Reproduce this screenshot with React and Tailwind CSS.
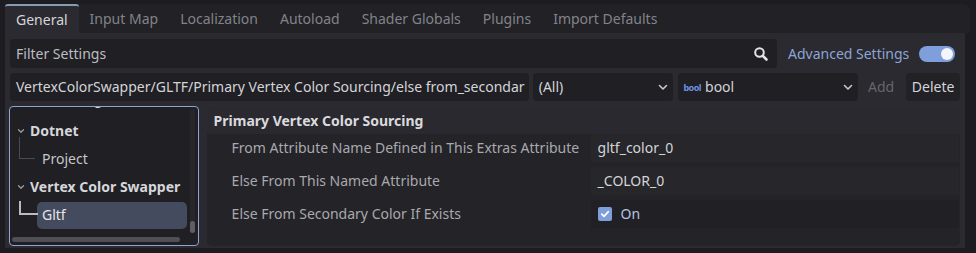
import React from "react";

const Chevron = ({ className = "" }) => (
  <svg width="12" height="12" viewBox="0 0 12 12" className={className}>
    <path d="M2.5 4.5 L6 8 L9.5 4.5" fill="none" stroke="#c8c8cc" strokeWidth="1.6" strokeLinecap="round" strokeLinejoin="round" />
  </svg>
);

const SmallChevron = () => (
  <svg width="8" height="8" viewBox="0 0 8 8">
    <path d="M1.5 2.8 L4 5.3 L6.5 2.8" fill="none" stroke="#9a9aa0" strokeWidth="1.3" strokeLinecap="round" strokeLinejoin="round" />
  </svg>
);

export default function App() {
  const tabs = ["General", "Input Map", "Localization", "Autoload", "Shader Globals", "Plugins", "Import Defaults"];
  return (
    <div
      className="w-[976px] h-[253px] bg-[#1c1c21] overflow-hidden text-[14px] leading-none"
      style={{ fontFamily: '"Noto Sans", "Open Sans", sans-serif' }}
    >
      <div className="pl-[5px] pt-[4px] w-[970px]">
        {/* Tab bar */}
        <div className="flex h-[29px] bg-[#212126] rounded-tr-[6px]">
          {tabs.map((t, i) =>
            i === 0 ? (
              <div key={t} className="flex items-center h-full px-[11px] bg-[#2a2a30] border-t-2 border-[#8b9ab3] rounded-t-[3px] text-[#d6d6da]">
                {t}
              </div>
            ) : (
              <div key={t} className="flex items-center h-full px-[11px] text-[#838389]">
                {t}
              </div>
            )
          )}
        </div>
        {/* Main panel */}
        <div className="w-[960px] h-[215px] bg-[#2a2a30] pt-[6px] px-[5px]">
          {/* Filter row */}
          <div className="flex items-center h-[29px]">
            <div className="flex items-center w-[767px] h-full bg-[#1f1f24] rounded-[4px] pl-[6px] pr-[8px] text-[#bdbdc1]">
              <span className="flex-1">Filter Settings</span>
              <svg width="16" height="16" viewBox="0 0 16 16">
                <circle cx="6.5" cy="6.5" r="4.3" fill="none" stroke="#e4e4e8" strokeWidth="2" />
                <path d="M9.8 9.8 L13.5 13.5" stroke="#e4e4e8" strokeWidth="2.6" strokeLinecap="round" />
              </svg>
            </div>
            <span className="ml-[11px] text-[#8da5d5]">Advanced Settings</span>
            <div className="ml-[10px] w-[36px] h-[16px] rounded-full bg-[#7e9fdc] flex items-center justify-end pr-[2px]">
              <div className="w-[12px] h-[12px] rounded-full bg-[#f4f6fb]" />
            </div>
          </div>
          {/* Path row */}
          <div className="flex items-center h-[28px] mt-[5px]">
            <div className="flex items-center w-[520px] h-full bg-[#1f1f24] rounded-[4px] pl-[6px] text-[#d4d4d8] overflow-hidden whitespace-nowrap">
              VertexColorSwapper/GLTF/Primary Vertex Color Sourcing/else from_secondar
            </div>
            <div className="flex items-center w-[141px] ml-[4px] h-full bg-[#1f1f24] rounded-[4px] pl-[6px] pr-[4px] text-[#d4d4d8]">
              <span className="flex-1">(All)</span>
              <Chevron />
            </div>
            <div className="flex items-center w-[180px] ml-[5px] h-full bg-[#1f1f24] rounded-[4px] pl-[5px] pr-[4px] text-[#d4d4d8]">
              <span className="text-[9px] font-bold text-[#6f92e0] tracking-[-0.5px] mr-[4px] leading-none">bool</span>
              <span className="flex-1">bool</span>
              <Chevron />
            </div>
            <span className="ml-[10px] text-[#66666c]">Add</span>
            <div className="ml-[12px] flex items-center justify-center w-[54px] h-full bg-[#212126] rounded-[4px] text-[#d4d4d8]">
              Delete
            </div>
          </div>
          {/* Bottom area */}
          <div className="flex mt-[5px] h-[140px]">
            {/* Tree */}
            <div className="relative -ml-[1px] w-[190px] h-[140px] bg-[#1f1f24] border border-[#8ea4d2] rounded-[4px] overflow-hidden">
              <div className="absolute left-[46px] -top-[15px] text-[#d4d4d8]">Settings</div>
              <div className="flex flex-col pl-[7px] pt-[10px]">
                <div className="flex items-center h-[28px] font-bold text-[#d6d6da]">
                  <span className="w-[13px] flex justify-start"><SmallChevron /></span>
                  <span>Dotnet</span>
                </div>
                <div className="relative flex items-center h-[28px] text-[#c6c6ca]">
                  <div className="absolute left-[2px] top-[-8px] w-[16px] h-[22px] border-l border-b border-[#4a4a50]" />
                  <span className="ml-[25px]">Project</span>
                </div>
                <div className="flex items-center h-[28px] font-bold text-[#d6d6da]">
                  <span className="w-[13px] flex justify-start"><SmallChevron /></span>
                  <span>Vertex Color Swapper</span>
                </div>
                <div className="relative flex items-center h-[28px] text-[#e4e4e8]">
                  <div className="absolute left-[2px] top-[0px] w-[19px] h-[14px] border-l-2 border-b-2 border-[#bcbcc0]" />
                  <div className="ml-[20px] w-[150px] h-[27px] rounded-[5px] bg-[#444b5e] flex items-center pl-[5px]">Gltf</div>
                </div>
              </div>
              {/* vertical scrollbar */}
              <div className="absolute right-[3px] top-[2px] w-[5px] h-[124px] rounded-full bg-[#26262b]">
                <div className="absolute bottom-0 left-0 w-[5px] h-[12px] rounded-full bg-[#5e5e64]" />
              </div>
              {/* horizontal scrollbar */}
              <div className="absolute left-[2px] bottom-[3px] w-[168px] h-[5px] rounded-full bg-[#4f4f55]" />
            </div>
            {/* Inspector */}
            <div className="ml-[8px] w-[755px] h-[139px] mt-[1px] bg-[#232328] rounded-[5px] overflow-hidden">
              <div className="flex items-center h-[27px] bg-[#29292f] pl-[7px] font-bold text-[#dadade]">
                Primary Vertex Color Sourcing
              </div>
              <div className="flex flex-col gap-[5px]">
                {[
                  ["From Attribute Name Defined in This Extras Attribute", "gltf_color_0"],
                  ["Else From This Named Attribute", "_COLOR_0"],
                  ["Else From Secondary Color If Exists", null],
                ].map(([label, val], i) => (
                  <div key={label} className="flex items-center h-[28px]">
                    <div className="w-[384px] pl-[25px] text-[#a9a9ae] whitespace-nowrap">{label}</div>
                    <div className={`flex items-center h-[28px] w-[368px] pl-[7px] text-[#d4d4d8] ${i === 2 ? "bg-[#202025]" : "bg-[#26262b]"}`}>
                      {val !== null ? (
                        val
                      ) : (
                        <>
                          <div className="w-[14px] h-[14px] rounded-[2px] bg-[#7e9fdc] flex items-center justify-center">
                            <svg width="10" height="10" viewBox="0 0 10 10">
                              <path d="M1.8 5.2 L4 7.4 L8.3 2.6" fill="none" stroke="#ffffff" strokeWidth="1.7" strokeLinecap="round" strokeLinejoin="round" />
                            </svg>
                          </div>
                          <span className="ml-[9px] text-[#b5c3e2]">On</span>
                        </>
                      )}
                    </div>
                  </div>
                ))}
              </div>
            </div>
          </div>
        </div>
      </div>
    </div>
  );
}
